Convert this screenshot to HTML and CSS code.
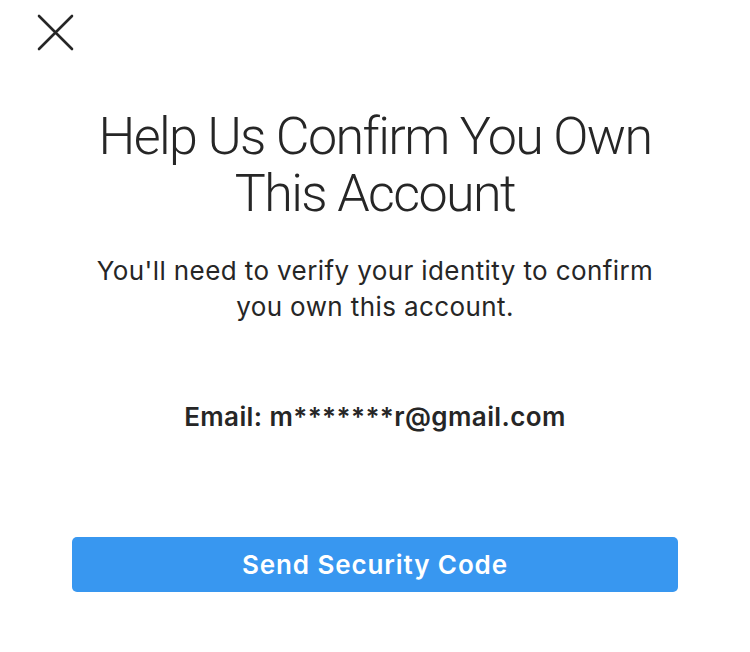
FILE: index.html
```html
<!DOCTYPE html>
<html>
<head>
<meta charset="utf-8">
<link rel="stylesheet" href="styles.css">
</head>
<body>
<div class="screen">
  <div class="topbar">
    <svg class="close" width="37" height="37" viewBox="0 0 37 37">
      <path d="M2 2L35 35M35 2L2 35" stroke="#262626" stroke-width="2.6" stroke-linecap="round" fill="none"/>
    </svg>
  </div>
  <h1 class="title">Help Us Confirm You Own This Account</h1>
  <p class="desc">You'll need to verify your identity to confirm you own this account.</p>
  <p class="email">Email: m*******r@gmail.com</p>
  <button class="btn">Send Security Code</button>
</div>
</body>
</html>
```
FILE: styles.css
```css
html, body {
  margin: 0;
  padding: 0;
  background: #ffffff;
}
.screen {
  width: 750px;
  height: 652px;
  display: flex;
  flex-direction: column;
  align-items: center;
  font-family: "Inter", "Roboto", sans-serif;
  color: #262626;
}
.topbar {
  align-self: stretch;
  padding: 14px 0 0 37px;
  height: 52px;
  box-sizing: border-box;
}
.close {
  display: block;
}
.title {
  margin: 56px 0 0;
  width: 620px;
  font-family: "Roboto", sans-serif;
  font-weight: 300;
  font-size: 52px;
  line-height: 57px;
  text-align: center;
  letter-spacing: -1.6px;
}
.desc {
  margin: 31px 0 0;
  width: 600px;
  font-size: 26px;
  line-height: 36px;
  text-align: center;
  font-weight: 400;
  letter-spacing: 0.4px;
}
.email {
  margin: 74px 0 0;
  font-size: 26px;
  line-height: 36px;
  font-weight: 600;
  letter-spacing: 0.4px;
}
.btn {
  margin-top: 102px;
  width: 606px;
  height: 55px;
  border: none;
  border-radius: 5px;
  background: #3897f0;
  color: #ffffff;
  font-family: "Inter", "Roboto", sans-serif;
  font-size: 26px;
  font-weight: 600;
  letter-spacing: 0.9px;
  padding: 0;
}
```
